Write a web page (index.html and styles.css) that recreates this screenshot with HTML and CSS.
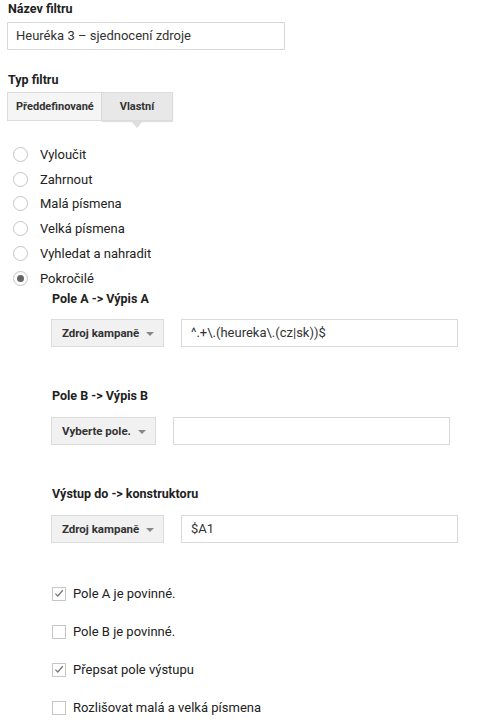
FILE: index.html
```html
<!DOCTYPE html>
<html lang="cs">
<head>
<meta charset="utf-8">
<title>Filtr</title>
<link rel="stylesheet" href="styles.css">
</head>
<body>
<div class="page">
  <div class="label first">Název filtru</div>
  <div class="textbox name">Heuréka 3 – sjednocení zdroje</div>

  <div class="label type">Typ filtru</div>
  <div class="tabs">
    <div class="tab">Předdefinované</div>
    <div class="tab active">Vlastní</div>
  </div>

  <div class="radios">
    <div class="radio"><span class="circle"></span>Vyloučit</div>
    <div class="radio"><span class="circle"></span>Zahrnout</div>
    <div class="radio"><span class="circle"></span>Malá písmena</div>
    <div class="radio"><span class="circle"></span>Velká písmena</div>
    <div class="radio"><span class="circle"></span>Vyhledat a nahradit</div>
    <div class="radio"><span class="circle on"></span>Pokročilé</div>
  </div>

  <div class="advanced">
    <div class="label">Pole A -&gt; Výpis A</div>
    <div class="fieldrow">
      <div class="select wide">Zdroj kampaně<span class="caret"></span></div>
      <div class="textbox field">^.+\.(heureka\.(cz|sk))$</div>
    </div>

    <div class="label gap">Pole B -&gt; Výpis B</div>
    <div class="fieldrow">
      <div class="select narrow">Vyberte pole.<span class="caret"></span></div>
      <div class="textbox field"></div>
    </div>

    <div class="label gap">Výstup do -&gt; konstruktoru</div>
    <div class="fieldrow">
      <div class="select wide">Zdroj kampaně<span class="caret"></span></div>
      <div class="textbox field">$A1</div>
    </div>

    <div class="checks">
      <div class="check"><span class="box"><svg viewBox="0 0 13 13" width="13" height="13"><path d="M2.6 6.6 L5.2 9.2 L10.6 3" fill="none" stroke="#777777" stroke-width="1.4"/></svg></span>Pole A je povinné.</div>
      <div class="check"><span class="box"></span>Pole B je povinné.</div>
      <div class="check"><span class="box"><svg viewBox="0 0 13 13" width="13" height="13"><path d="M2.6 6.6 L5.2 9.2 L10.6 3" fill="none" stroke="#777777" stroke-width="1.4"/></svg></span>Přepsat pole výstupu</div>
      <div class="check"><span class="box"></span>Rozlišovat malá a velká písmena</div>
    </div>
  </div>
</div>
</body>
</html>
```

FILE: styles.css
```css
html, body {
  margin: 0;
  padding: 0;
  background: #ffffff;
}

body {
  font-family: Roboto, "Liberation Sans", Arial, sans-serif;
  font-size: 13px;
  color: #222222;
}

.page {
  padding: 1px 0 0 7px;
}

.label {
  font-weight: bold;
  font-size: 12.5px;
  line-height: 16px;
  color: #222222;
  padding-left: 1px;
}

.label.first {
  margin-bottom: 5px;
}

.label.type {
  margin-top: 22px;
  margin-bottom: 4px;
}

.textbox {
  box-sizing: border-box;
  height: 28px;
  border: 1px solid #d9d9d9;
  background: #fff;
  font-size: 13px;
  line-height: 26px;
  color: #333333;
  padding-left: 8px;
  white-space: nowrap;
}

.textbox.name {
  width: 278px;
}

.tabs {
  display: flex;
  height: 29px;
}

.tab {
  box-sizing: border-box;
  height: 29px;
  border: 1px solid #dcdcdc;
  background: #f5f5f5;
  font-weight: bold;
  font-size: 11px;
  line-height: 27px;
  color: #333333;
  padding: 0 8px;
  width: 95px;
  text-align: center;
}

.tab.active {
  position: relative;
  width: 71px;
  border-left: none;
  background: #e8e8e8;
  box-shadow: 0 1px 1px rgba(0, 0, 0, 0.12);
}

.tab.active::after {
  content: "";
  position: absolute;
  left: 29px;
  top: 28px;
  border-left: 6px solid transparent;
  border-right: 6px solid transparent;
  border-top: 7px solid #dedede;
}

.radios {
  margin-top: 21px;
}

.radio {
  display: flex;
  align-items: center;
  height: 24.8px;
  font-size: 13px;
  color: #222222;
}

.circle {
  box-sizing: border-box;
  width: 15px;
  height: 15px;
  border: 1px solid #c4c4c4;
  border-radius: 50%;
  margin: 0 12px 0 6px;
  display: flex;
  align-items: center;
  justify-content: center;
}

.circle.on::after {
  content: "";
  width: 7px;
  height: 7px;
  border-radius: 50%;
  background: #666666;
}

.advanced {
  padding-left: 44px;
}

.advanced .label {
  margin-bottom: 12px;
}

.advanced .label.gap {
  margin-top: 41px;
  margin-bottom: 13px;
}

.fieldrow {
  display: flex;
  gap: 17px;
}

.select {
  box-sizing: border-box;
  height: 28px;
  display: flex;
  align-items: center;
  justify-content: space-between;
  border: 1px solid #dcdcdc;
  background: #f1f1f1;
  font-weight: bold;
  font-size: 11.5px;
  color: #333333;
  padding: 0 9px 0 10px;
}

.select.wide {
  width: 113px;
}

.select.narrow {
  width: 105px;
}

.caret {
  width: 0;
  height: 0;
  border-left: 4px solid transparent;
  border-right: 4px solid transparent;
  border-top: 4px solid #888888;
  margin-top: 2px;
}

.textbox.field {
  width: 277px;
  padding-left: 9px;
}

.checks {
  margin-top: 32px;
}

.check {
  display: flex;
  align-items: center;
  height: 38px;
  font-size: 13px;
  color: #222222;
}

.box {
  box-sizing: border-box;
  width: 14px;
  height: 14px;
  border: 1px solid #c6c6c6;
  margin: 0 7px 0 1px;
  position: relative;
  display: flex;
  align-items: center;
  justify-content: center;
}

.box svg {
  display: block;
}
```
